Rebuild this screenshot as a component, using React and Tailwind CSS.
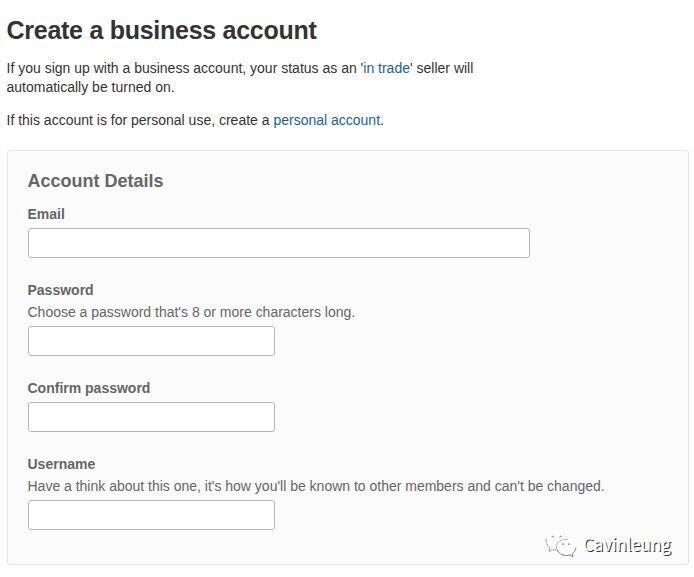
function Field({ label, hint, type = 'text', wide = false }) {
  return (
    <label className="block">
      <span className="-ml-[0.5px] block text-sm leading-5 font-bold">{label}</span>
      {hint && <span className="mt-0.5 -ml-[0.5px] block text-sm leading-5 tracking-[-0.006px] whitespace-nowrap">{hint}</span>}
      <input
        type={type}
        className={`mt-1 block h-[30px] rounded-[3px] border border-[#b7b7b7] bg-white px-2 outline-none ${wide ? 'w-[502px]' : 'w-[247px]'}`}
      />
    </label>
  );
}

function Watermark() {
  return (
    <div className="absolute top-[531px] left-[545px] flex items-start">
      <svg width="32" height="27" viewBox="0 0 32 27" fill="none">
        <path
          d="M12 1C5.500 1 1 5 1 10c0 3 1.600 5.500 4 7l-1 3.500L8 18.500c1.200.4 2.600.6 4 .6 6 0 11-4 11-9S18 1 12 1Z"
          fill="white"
        />
        <path d="M1.200 7.500C.8 12 2 14.500 5 17l-1 3.500L8 18.500c1.200.3 2.200.5 3.500.5" stroke="#888" strokeWidth="0.8" strokeDasharray="4 0.7" />
        <path d="M18 3.200C20 4 21 5.200 22 7" stroke="#bbb" strokeWidth="0.7" strokeDasharray="1.500 2" />
        <path
          d="M21 8.500c-5.500 0-9.700 3.500-9.700 8s4.200 8 9.700 8c1.300 0 2.500-.2 3.700-.6l3.300 1.700-.8-3c2.200-1.500 3.500-3.700 3.500-6.100 0-4.500-4.200-8-9.700-8Z"
          fill="white"
        />
        <path d="M22.500 8.500c-6.500-.5-11 3-11 7.500 0 1 .2 2 .7 3" stroke="#999" strokeWidth="0.8" strokeDasharray="4 0.7" />
        <path d="M12.200 19c1.500 3.500 5 5.500 8.800 5.500 1.300 0 2.500-.2 3.700-.6l3.300 1.700-.8-3c2.200-1.500 3.500-3.700 3.500-6.100" stroke="#666" strokeWidth="0.9" strokeDasharray="5 0.500" />
        <path d="M6.500 6q1-1.500 2.200 0M14.500 6q1-1.500 2.200 0M16.800 13.500q1-1.500 2.200 0M23 13.500q1-1.500 2.200 0" stroke="#555" strokeWidth="0.9" />
      </svg>
      <span className="ml-[6px] font-['Noto_Sans_CJK_SC','Noto_Sans',sans-serif] text-[17px] leading-[26px] tracking-[-0.1px] text-white [text-shadow:1px_1px_0_#333]">
        Cavinleung
      </span>
    </div>
  );
}

export default function App() {
  return (
    <main className="relative h-[577px] w-[694px] overflow-hidden bg-white pt-[15px] pl-[6.5px] font-['Liberation_Sans',Arial,sans-serif] text-[#333]">
      <h1 className="text-[25px] leading-[30px] font-bold tracking-[-0.27px]">Create a business account</h1>
      <p className="mt-3.5 w-[480px] text-sm leading-[19px]">
        If you sign up with a business account, your status as an '<a className="text-[#1a5dab]">in trade</a>' seller will
        <br />
        automatically be turned on.
      </p>
      <p className="mt-3.5 text-sm leading-[19px]">
        If this account is for personal use, create a <a className="text-[#1a5dab]">personal account</a>.
      </p>
      <section className="mt-5 ml-[0.5px] h-[415px] w-[682px] rounded-[3px] border border-[#e5e5e5] bg-[#fbfbfb] px-5 pt-[18px] text-[#666]">
        <h2 className="-ml-[0.5px] text-[18px] leading-6 font-bold">Account Details</h2>
        <form className="mt-[11px] flex flex-col gap-[22px]">
          <Field label="Email" wide />
          <Field label="Password" hint="Choose a password that's 8 or more characters long." type="password" />
          <Field label="Confirm password" type="password" />
          <Field label="Username" hint="Have a think about this one, it's how you'll be known to other members and can't be changed." />
        </form>
      </section>
      <Watermark />
    </main>
  );
}
